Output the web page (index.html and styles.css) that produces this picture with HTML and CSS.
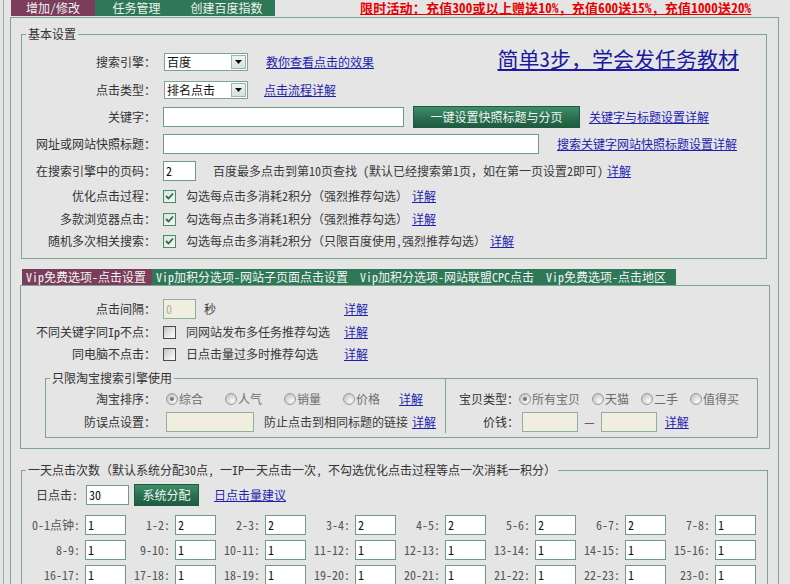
FILE: index.html
```html
<!DOCTYPE html>
<html lang="zh-CN">
<head>
<meta charset="utf-8">
<title>增加/修改任务</title>
<link rel="stylesheet" href="styles.css">
</head>
<body>
<div class="page">
  <div class="topbar">
    <nav class="tabs">
      <span class="tab tab-on w1">增加/修改</span>
      <span class="tab w2">任务管理</span>
      <span class="tab w3">创建百度指数</span>
    </nav>
    <a class="promo" href="#">限时活动：充值300或以上赠送10%，充值600送15%，充值1000送20%</a>
  </div>

  <div class="panel">
    <fieldset class="group basic">
      <legend>基本设置</legend>
      <div class="row h28">
        <span class="lbl">搜索引擎：</span>
        <div class="select"><span class="sel-val">百度</span><span class="sel-btn"><svg width="7" height="4" viewBox="0 0 7 4"><path d="M0 0h7L3.5 4z" fill="#111"/></svg></span></div>
        <a class="link ml18" href="#">教你查看点击的效果</a>
        <a class="big-link" href="#">简单3步，学会发任务教材</a>
      </div>
      <div class="row h28">
        <span class="lbl">点击类型：</span>
        <div class="select"><span class="sel-val">排名点击</span><span class="sel-btn"><svg width="7" height="4" viewBox="0 0 7 4"><path d="M0 0h7L3.5 4z" fill="#111"/></svg></span></div>
        <a class="link ml16" href="#">点击流程详解</a>
      </div>
      <div class="row h26">
        <span class="lbl">关键字：</span>
        <span class="input w240"></span>
        <button class="btn btn-wide" type="button">一键设置快照标题与分页</button>
        <a class="link ml9" href="#">关键字与标题设置详解</a>
      </div>
      <div class="row h27">
        <span class="lbl">网址或网站快照标题：</span>
        <span class="input w376"></span>
        <a class="link ml18" href="#">搜索关键字网站快照标题设置详解</a>
      </div>
      <div class="row h27">
        <span class="lbl">在搜索引擎中的页码：</span>
        <span class="input w32">2</span>
        <span class="txt ml17">百度最多点击到第10页查找 (默认已经搜索第1页，如在第一页设置2即可)</span>
        <a class="link ml4" href="#">详解</a>
      </div>
      <div class="row h24">
        <span class="lbl">优化点击过程：</span>
        <span class="cb cb-on"><svg width="9" height="8" viewBox="0 0 9 8"><path d="M1 4l2.5 2.5L8 1.5" fill="none" stroke="#2c6b4b" stroke-width="1.8"/></svg></span>
        <span class="txt ml10">勾选每点击多消耗2积分（强烈推荐勾选）</span>
        <a class="link ml4" href="#">详解</a>
      </div>
      <div class="row h22">
        <span class="lbl">多款浏览器点击：</span>
        <span class="cb cb-on"><svg width="9" height="8" viewBox="0 0 9 8"><path d="M1 4l2.5 2.5L8 1.5" fill="none" stroke="#2c6b4b" stroke-width="1.8"/></svg></span>
        <span class="txt ml10">勾选每点击多消耗1积分（强烈推荐勾选）</span>
        <a class="link ml4" href="#">详解</a>
      </div>
      <div class="row h22">
        <span class="lbl">随机多次相关搜索：</span>
        <span class="cb cb-on"><svg width="9" height="8" viewBox="0 0 9 8"><path d="M1 4l2.5 2.5L8 1.5" fill="none" stroke="#2c6b4b" stroke-width="1.8"/></svg></span>
        <span class="txt ml10">勾选每点击多消耗2积分（只限百度使用,强烈推荐勾选）</span>
        <a class="link ml4" href="#">详解</a>
      </div>
    </fieldset>

    <nav class="vip-tabs">
      <span class="vtab vtab-on">Vip免费选项-点击设置</span>
      <span class="vtab">Vip加积分选项-网站子页面点击设置</span>
      <span class="vtab">Vip加积分选项-网站联盟CPC点击</span>
      <span class="vtab">Vip免费选项-点击地区</span>
    </nav>
    <div class="vip-panel">
      <div class="row h24">
        <span class="lbl lbl-vip">点击间隔：</span>
        <span class="vip-body">
          <span class="input w32 input-off">0</span>
          <span class="txt ml8">秒</span>
        </span>
        <a class="link" href="#">详解</a>
      </div>
      <div class="row h22">
        <span class="lbl lbl-vip">不同关键字同Ip不点：</span>
        <span class="vip-body">
          <span class="cb"></span>
          <span class="txt ml10">同网站发布多任务推荐勾选</span>
        </span>
        <a class="link" href="#">详解</a>
      </div>
      <div class="row h22">
        <span class="lbl lbl-vip">同电脑不点击：</span>
        <span class="vip-body">
          <span class="cb"></span>
          <span class="txt ml10">日点击量过多时推荐勾选</span>
        </span>
        <a class="link" href="#">详解</a>
      </div>
      <fieldset class="group taobao">
        <legend>只限淘宝搜索引擎使用</legend>
        <div class="tb-cols">
          <div class="tb-left">
            <div class="row h24">
              <span class="lbl lbl-tb">淘宝排序：</span>
              <div class="radios gap22">
                <span class="radio"><span class="dot dot-on"></span>综合</span>
                <span class="radio"><span class="dot"></span>人气</span>
                <span class="radio"><span class="dot"></span>销量</span>
                <span class="radio"><span class="dot"></span>价格</span>
              </div>
              <a class="link ml19" href="#">详解</a>
            </div>
            <div class="row h22">
              <span class="lbl lbl-tb">防误点设置：</span>
              <span class="input w88 input-off"></span>
              <span class="txt ml10">防止点击到相同标题的链接</span>
              <a class="link ml4" href="#">详解</a>
            </div>
          </div>
          <div class="tb-right">
            <div class="row h24">
              <span class="lbl lbl-tb2">宝贝类型：</span>
              <div class="radios gap12">
                <span class="radio"><span class="dot dot-on"></span>所有宝贝</span>
                <span class="radio"><span class="dot"></span>天猫</span>
                <span class="radio"><span class="dot"></span>二手</span>
                <span class="radio"><span class="dot"></span>值得买</span>
              </div>
            </div>
            <div class="row h22">
              <span class="lbl lbl-tb2">价钱：</span>
              <span class="input w56 input-off ml3"></span>
              <span class="txt dash">—</span>
              <span class="input w56 input-off"></span>
              <a class="link ml8" href="#">详解</a>
            </div>
          </div>
        </div>
      </fieldset>
    </div>

    <fieldset class="group daily">
      <legend>一天点击次数（默认系统分配30点, 一IP一天点击一次, 不勾选优化点击过程等点一次消耗一积分）</legend>
      <div class="row h24 day-row">
        <span class="txt">日点击:</span>
        <span class="input w42 ml8">30</span>
        <button class="btn btn-sys" type="button">系统分配</button>
        <a class="link ml15" href="#">日点击量建议</a>
      </div>
      <div class="hours">
        <div class="hour"><span class="hl">0-1点钟:</span><span class="input w41">1</span></div>
        <div class="hour"><span class="hl">1-2:</span><span class="input w41">2</span></div>
        <div class="hour"><span class="hl">2-3:</span><span class="input w41">2</span></div>
        <div class="hour"><span class="hl">3-4:</span><span class="input w41">2</span></div>
        <div class="hour"><span class="hl">4-5:</span><span class="input w41">2</span></div>
        <div class="hour"><span class="hl">5-6:</span><span class="input w41">2</span></div>
        <div class="hour"><span class="hl">6-7:</span><span class="input w41">2</span></div>
        <div class="hour"><span class="hl">7-8:</span><span class="input w41">1</span></div>
        <div class="hour"><span class="hl">8-9:</span><span class="input w41">1</span></div>
        <div class="hour"><span class="hl">9-10:</span><span class="input w41">1</span></div>
        <div class="hour"><span class="hl">10-11:</span><span class="input w41">1</span></div>
        <div class="hour"><span class="hl">11-12:</span><span class="input w41">1</span></div>
        <div class="hour"><span class="hl">12-13:</span><span class="input w41">1</span></div>
        <div class="hour"><span class="hl">13-14:</span><span class="input w41">1</span></div>
        <div class="hour"><span class="hl">14-15:</span><span class="input w41">1</span></div>
        <div class="hour"><span class="hl">15-16:</span><span class="input w41">1</span></div>
        <div class="hour"><span class="hl">16-17:</span><span class="input w41">1</span></div>
        <div class="hour"><span class="hl">17-18:</span><span class="input w41">1</span></div>
        <div class="hour"><span class="hl">18-19:</span><span class="input w41">1</span></div>
        <div class="hour"><span class="hl">19-20:</span><span class="input w41">1</span></div>
        <div class="hour"><span class="hl">20-21:</span><span class="input w41">1</span></div>
        <div class="hour"><span class="hl">21-22:</span><span class="input w41">1</span></div>
        <div class="hour"><span class="hl">22-23:</span><span class="input w41">1</span></div>
        <div class="hour"><span class="hl">23-0:</span><span class="input w41">1</span></div>
      </div>
    </fieldset>
  </div>
</div>
</body>
</html>
```

FILE: styles.css
```css
* { box-sizing: border-box; }
html, body { margin: 0; height: 100%; }
body {
  background: #e5e5e5;
  color: #3a3a3a;
  font: 12px/14px "Noto Sans Mono CJK SC", "Noto Sans CJK SC", sans-serif;
  overflow: hidden;
}
.page {
  margin-left: 3px;
  padding-left: 6px;
  border-left: 1px solid #8fb0a2;
  min-height: 100%;
}

/* top bar */
.topbar { display: flex; align-items: flex-start; height: 17px; }
.tabs { display: flex; margin-left: 1px; flex: none; }
.tab {
  height: 16px; line-height: 16px; text-align: center;
  background: #2e7858; color: #eef2ef;
}
.tab-on { background: #7b3d5b; }
.w1 { width: 84px; }
.w2 { width: 83px; }
.w3 { width: 97px; }
.promo {
  flex: none;
  margin: 1px 0 0 85px;
  color: #e60000; font-weight: bold; font-size: 13px; line-height: 14px;
  letter-spacing: 0.2px;
  text-decoration: underline; white-space: nowrap;
}

/* main panel */
.panel {
  width: 769px; min-height: 600px;
  border: 1px solid #7ea594; border-bottom: none;
  padding-top: 9px;
}
.group {
  margin: 0; padding: 0; min-width: 0;
  border: 1px solid #7ea594;
}
.group legend {
  margin-left: 4px; padding: 0 2px;
  line-height: 14px; color: #333;
}
.basic { margin: 0 11px 0 10px; padding: 7px 0 6px; }

.row { display: flex; align-items: center; }
.h28 { height: 28px; }
.h27 { height: 27px; }
.h26 { height: 26px; }
.h24 { height: 24px; }
.h22 { height: 22px; }

.lbl { width: 134px; margin-right: 7px; text-align: right; color: #333; white-space: nowrap; flex: none; }
.txt { white-space: nowrap; }
.link { color: #1f1fae; text-decoration: underline; white-space: nowrap; }
.ml3 { margin-left: 3px; }
.ml4 { margin-left: 4px; }
.ml8 { margin-left: 8px; }
.ml9 { margin-left: 9px; }
.ml10 { margin-left: 10px; }
.ml15 { margin-left: 15px; }
.ml16 { margin-left: 16px; }
.ml17 { margin-left: 17px; }
.ml18 { margin-left: 18px; }
.ml19 { margin-left: 19px; }

.big-link {
  margin-left: auto; margin-right: 27px; align-self: flex-start;
  margin-top: -1px;
  color: #1a1aa0; font-size: 21px; line-height: 22px;
  text-decoration: underline; white-space: nowrap;
}

/* select */
.select {
  display: flex; align-items: center; justify-content: space-between;
  width: 84px; height: 18px; margin-left: 1px;
  background: #fff; border: 1px solid #7ea594;
}
.sel-val { padding-left: 2px; color: #111; }
.sel-btn {
  display: flex; align-items: center; justify-content: center;
  width: 15px; height: 14px; margin-right: 1px;
  background: linear-gradient(#eef3f0, #d7e2dc);
  border: 1px solid #9ab8aa;
}

/* inputs */
.input {
  display: block; height: 20px; flex: none;
  background: #fff; border: 1px solid #6d9d87;
  padding: 0 2px; line-height: 17px; color: #111;
}
.w240 { width: 241px; }
.w376 { width: 376px; }
.w32 { width: 33px; }
.w88 { width: 88px; }
.w56 { width: 56px; }
.w42 { width: 43px; }
.w41 { width: 41px; }
.input-off { background: #efeedf; border-color: #8fb09f; color: #b0b0a8; }

/* buttons */
.btn {
  height: 22px; padding: 0; margin: 0;
  font: inherit; color: #eef4f0;
  background: linear-gradient(#3f8e69, #2a6e4f 55%, #1f5b41);
  border: 1px solid #1f5a40;
}
.btn-wide { width: 167px; margin-left: 9px; }
.btn-sys { width: 65px; margin-left: 5px; }

/* checkbox */
.cb {
  display: flex; align-items: center; justify-content: center; flex: none;
  width: 13px; height: 13px;
  border: 1px solid #4c4c4c;
  background: linear-gradient(135deg, #c4c4c4, #f6f6f6 80%);
}
.cb-on {
  border-color: #4e8a6a;
  background: linear-gradient(135deg, #d9e6dc, #f4f8f4);
}

/* vip tabs */
.vip-tabs { display: flex; margin: 10px 0 0 11px; height: 16px; }
.vtab {
  height: 16px; line-height: 16px; padding: 0 8px 0 4px;
  background: #2e7858; color: #f2f4f2; white-space: nowrap;
}
.vtab-on { background: #7b3d5b; padding-right: 6px; }
.vtab:last-child { padding-right: 10px; }

.vip-panel {
  width: 750px; margin-left: 9px;
  border: 1px solid #7ea594;
  padding: 11px 0 10px;
}
.lbl-vip { width: 135px; }
.vip-body { display: flex; align-items: center; width: 181px; }

.taobao { width: 713px; margin: 6px 0 0 24px; padding: 0 0 4px; }
.tb-cols { display: flex; margin-top: -7px; }
.tb-left { width: 400px; border-right: 1px solid #7ea594; padding-top: 9px; }
.tb-right { padding: 9px 0 0 9px; }
.lbl-tb { width: 110px; margin-right: 10px; }
.lbl-tb2 { width: 64px; margin-right: 0; }

.radios { display: flex; }
.gap22 { gap: 22px; }
.gap12 { gap: 12px; }
.radio { display: flex; align-items: center; color: #6e6e6e; white-space: nowrap; }
.dot {
  display: flex; align-items: center; justify-content: center; flex: none;
  width: 12px; height: 12px; margin-right: 1px;
  border: 1px solid #9a9a9a; border-radius: 50%;
  background: radial-gradient(circle at 65% 70%, #fafafa, #c8c8c8 75%);
}
.dot-on::after {
  content: ""; width: 4px; height: 4px; border-radius: 50%; background: #777;
}
.dash { margin: 0 6px; color: #444; }

/* daily */
.daily { width: 747px; margin: 14px 0 0 10px; padding: 6px 0 40px; }
.day-row { padding-left: 14px; }
.hours {
  display: grid; grid-template-columns: repeat(8, 90px);
  grid-auto-rows: 25px; margin: 5px 0 0 14px;
}
.hour { display: flex; align-items: center; justify-content: flex-end; }
.hl { flex: none; margin-right: 5px; color: #555; white-space: nowrap; }
```
